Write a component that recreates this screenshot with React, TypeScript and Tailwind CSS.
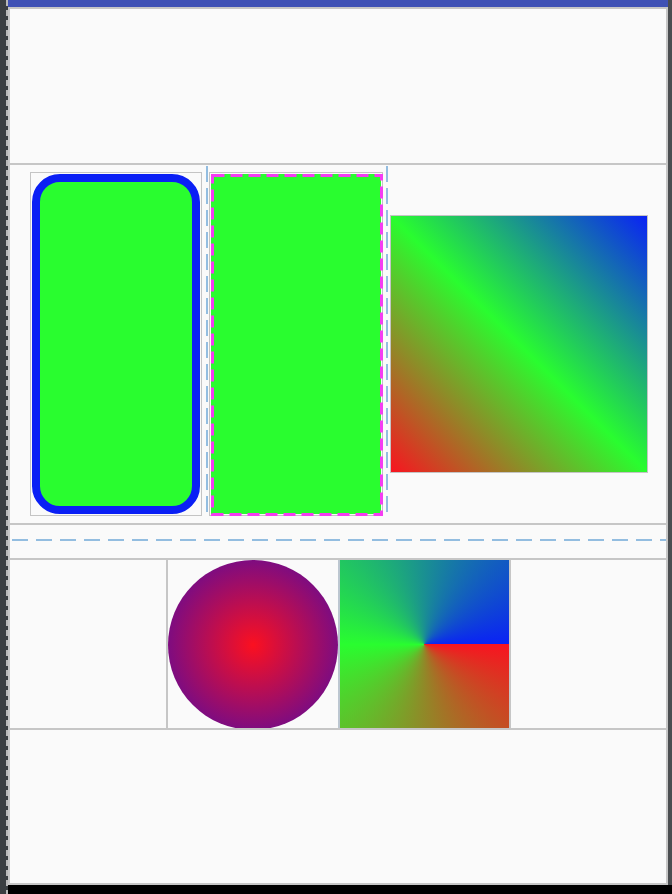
const GREEN = '#29fd2f'

function DashV({ className = '' }: { className?: string }) {
  return (
    <div
      className={`w-[2px] bg-[repeating-linear-gradient(to_bottom,#93bde0_0_16px,transparent_16px_22px)] ${className}`}
    />
  )
}

function HLine() {
  return <div className="h-[2px] bg-[#c6c6c6]" />
}

export default function App() {
  return (
    <div className="flex h-[894px] w-[672px] bg-black">
      {/* left gutter */}
      <div className="flex h-full w-[8px] justify-end bg-[#3a3e41]">
        <div className="h-full w-[2px] bg-[repeating-linear-gradient(to_bottom,#b8b8b8_0_6px,transparent_6px_10px)]" />
      </div>

      <div className="flex h-[885px] flex-1">
        <div className="flex flex-1 flex-col">
          <div className="h-[7px] bg-[#3f51b5]" />
          <div className="flex flex-1 flex-col border-x-2 border-b-2 border-t-2 border-[#c6c6c6] bg-[#fafafa]">
            <div className="h-[154px]" />
            <HLine />

            {/* row 1 */}
            <div className="flex h-[358px] pl-[20px]">
              <div className="mt-[7px] h-[344px] w-[172px] border border-[#c4c4c4] p-px">
                <div className="h-full w-full rounded-[28px] border-[8px] border-[#0a1ff5]" style={{ backgroundColor: GREEN }} />
              </div>
              <DashV className="ml-[4px] mt-[1px] h-[351px]" />
              <div className="ml-[1px] mt-[7px] h-[344px] w-[174px] border border-[#c4c4c4] p-px">
                <div className="relative h-full w-full bg-[#29fd2f]">
                  <svg className="absolute inset-0" width="172" height="342">
                    <rect x="1.5" y="1.5" width="169" height="339" fill="none" stroke="#f53cf2" strokeWidth="3" strokeDasharray="12 6" />
                  </svg>
                </div>
              </div>
              <DashV className="ml-[3px] mt-[1px] h-[351px]" />
              <div className="ml-[2px] h-[258px] w-[258px] self-center border border-[#c4c4c4] bg-[linear-gradient(45deg,#f81420,#29fd2f,#0a22f5)]" />
            </div>

            <HLine />
            <div className="h-[14px]" />
            <div className="h-[2px] bg-[repeating-linear-gradient(to_right,transparent_0_2px,#93bde0_2px_18px,transparent_18px_24px)]" />
            <div className="h-[17px]" />
            <HLine />

            {/* row 2 */}
            <div className="flex h-[168px]">
              <div className="w-[156px]" />
              <div className="w-[2px] bg-[#c6c6c6]" />
              <div className="h-[170px] w-[170px] shrink-0 rounded-full bg-[radial-gradient(circle_closest-side,#fb1020,#7e0c80)]" />
              <div className="w-[2px] bg-[#bcc6d0]" />
              <div className="h-[169px] w-[169px] shrink-0 bg-[conic-gradient(from_90deg,#f81420,#29fd2f,#0a22f5)]" />
              <div className="w-[2px] bg-[#c6c6c6]" />
            </div>
            <HLine />
          </div>
        </div>
        <div className="w-[4px] bg-[#4a4d50]" />
      </div>
    </div>
  )
}
